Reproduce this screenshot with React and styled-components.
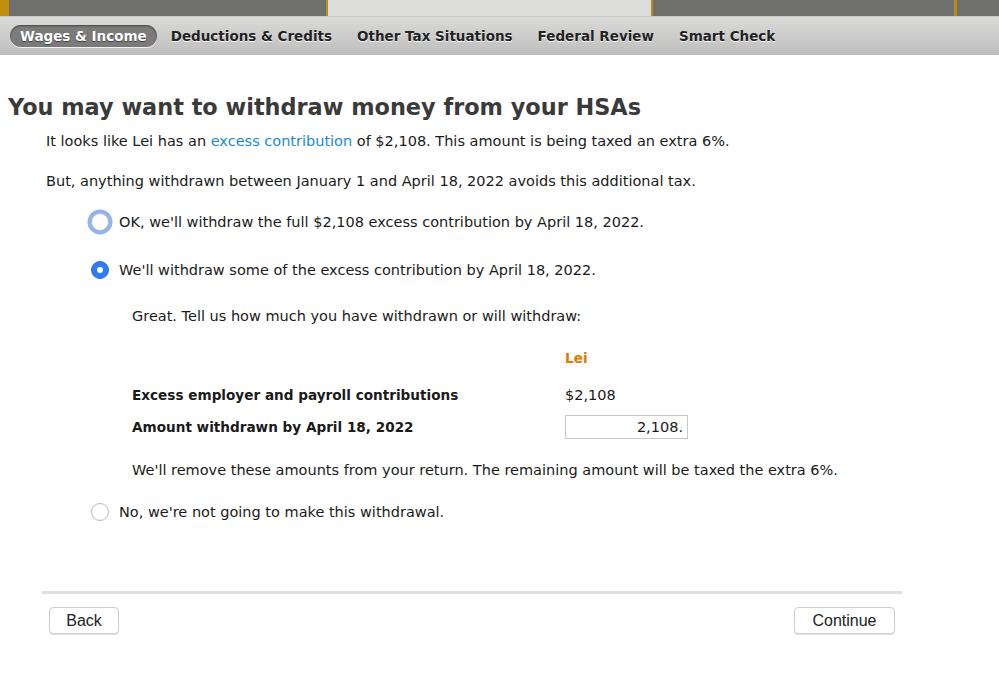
import React from "react";
import styled, { createGlobalStyle } from "styled-components";

const Global = createGlobalStyle`
  html, body { margin: 0; padding: 0; background: #fff; }
  body { font-family: "DejaVu Sans", "Noto Sans", sans-serif; color: #1a1a1a; }
`;

const Page = styled.div`
  width: 999px;
  height: 690px;
  overflow: hidden;
  display: flex;
  flex-direction: column;
`;

const TopTabs = styled.div`
  height: 16px;
  display: flex;
  background: #6f706e;
  border-left: 9px solid #c18f0f;
`;

const TopTab = styled.div`
  width: ${(p) => p.$w}px;
  flex: none;
  background: ${(p) => p.$bg || "#6f706e"};
  border-right: ${(p) => p.$edge || 0}px solid #b98c1a;
`;

const NavBar = styled.div`
  height: 38px;
  display: flex;
  align-items: center;
  padding-left: 10px;
  background: linear-gradient(#dadad9, #bebebe);
  border-top: 1px solid #c9c9c9;
`;

const NavItem = styled.div`
  font-size: 13.5px;
  font-weight: bold;
  padding: 0 ${(p) => (p.$active ? "10px" : "12.5px")};
  height: 22px;
  line-height: 22px;
  border-radius: 11px;
  margin-right: ${(p) => (p.$active ? "1.5px" : "0")};
  color: ${(p) => (p.$active ? "#fff" : "#222")};
  background: ${(p) => (p.$active ? "#7b7b7b" : "transparent")};
  box-shadow: ${(p) => (p.$active ? "inset 0 1px 2px rgba(0,0,0,.45), 0 1px 0 #f2f2f2" : "none")};
  text-shadow: ${(p) => (p.$active ? "0 1px 1px rgba(0,0,0,.5)" : "0 1px 0 #fff")};
  white-space: nowrap;
`;

const Content = styled.div`
  flex: 1;
  padding: 38px 0 0 8px;
  display: flex;
  flex-direction: column;
`;

const Title = styled.h1`
  margin: 0;
  font-size: 22.4px;
  font-weight: bold;
  color: #3a3a3a;
  line-height: 28px;
`;

const Para = styled.p`
  margin: ${(p) => p.$mt ?? 0}px 0 0 ${(p) => p.$ml ?? 38}px;
  font-size: 14.5px;
  line-height: 18px;
  color: #1a1a1a;
`;

const Link = styled.span`
  color: #1b8ad3;
`;

const Option = styled.div`
  margin: ${(p) => p.$mt}px 0 0 83px;
  display: flex;
  align-items: center;
  gap: 10px;
  font-size: 14.5px;
  line-height: 18px;
`;

const Radio = styled.span`
  width: 18px;
  height: 18px;
  box-sizing: border-box;
  border-radius: 50%;
  flex: none;
  position: relative;
  background: ${(p) => (p.$checked ? "#2f7cf6" : "#fff")};
  border: 1px solid ${(p) => (p.$checked ? "#2a6fe0" : "#b9b9b9")};
  box-shadow: ${(p) => (p.$focus ? "0 0 0 3.5px #8fb4ef" : "none")};
  &::after {
    content: "";
    display: ${(p) => (p.$checked ? "block" : "none")};
    position: absolute;
    left: 50%;
    top: 50%;
    width: 6px;
    height: 6px;
    margin: -3px 0 0 -3px;
    border-radius: 50%;
    background: #fff;
  }
`;

const Sub = styled.div`
  margin-left: 124px;
  display: flex;
  flex-direction: column;
`;

const Grid = styled.div`
  margin-top: 11px;
  display: grid;
  grid-template-columns: 433px 124px;
  font-size: 14.5px;
`;

const Cell = styled.div`
  height: ${(p) => p.$h}px;
  display: flex;
  align-items: center;
  font-weight: ${(p) => (p.$bold ? "bold" : "normal")};
  font-size: ${(p) => (p.$bold ? "13.6px" : "14.5px")};
  color: ${(p) => p.$color || "#1a1a1a"};
`;

const Input = styled.div`
  width: 123px;
  height: 24px;
  box-sizing: border-box;
  border: 1px solid #c8c8c8;
  text-align: right;
  padding-right: 4px;
  line-height: 22px;
  font-size: 14.5px;
`;

const Footer = styled.div`
  margin: 70px 0 0 34px;
  width: 860px;
  display: flex;
  flex-direction: column;
`;

const Divider = styled.div`
  height: 3px;
  background: #e0e0e0;
`;

const Buttons = styled.div`
  display: flex;
  justify-content: space-between;
  padding: 13px 7px 0 7px;
`;

const Button = styled.button`
  font-family: "Liberation Sans", Arial, sans-serif;
  font-size: 16px;
  color: #222;
  height: 27px;
  width: ${(p) => p.$w}px;
  background: #fff;
  border: 1px solid #cfcfcf;
  border-radius: 4px;
  box-shadow: 0 1px 1px rgba(0,0,0,.12);
  padding: 0;
`;

export default function App() {
  return (
    <Page>
      <Global />
      <TopTabs>
        <TopTab $w={317} $edge={2} />
        <TopTab $w={323} $bg="#dcdddb" $edge={2} />
        <TopTab $w={301} $edge={3} />
      </TopTabs>
      <NavBar>
        <NavItem $active>Wages &amp; Income</NavItem>
        <NavItem>Deductions &amp; Credits</NavItem>
        <NavItem>Other Tax Situations</NavItem>
        <NavItem>Federal Review</NavItem>
        <NavItem>Smart Check</NavItem>
      </NavBar>
      <Content>
        <Title>You may want to withdraw money from your HSAs</Title>
        <Para $mt={11}>
          It looks like Lei has an <Link>excess contribution</Link> of $2,108. This amount is being taxed an extra 6%.
        </Para>
        <Para $mt={22}>But, anything withdrawn between January 1 and April 18, 2022 avoids this additional tax.</Para>
        <Option $mt={23}>
          <Radio $focus />
          <span>OK, we'll withdraw the full $2,108 excess contribution by April 18, 2022.</span>
        </Option>
        <Option $mt={30}>
          <Radio $checked />
          <span>We'll withdraw some of the excess contribution by April 18, 2022.</span>
        </Option>
        <Sub>
          <Para $mt={28} $ml={0}>Great. Tell us how much you have withdrawn or will withdraw:</Para>
          <Grid>
            <Cell $h={43} />
            <Cell $h={43} $bold $color="#e07b00">Lei</Cell>
            <Cell $h={32} $bold>Excess employer and payroll contributions</Cell>
            <Cell $h={32}>$2,108</Cell>
            <Cell $h={32} $bold>Amount withdrawn by April 18, 2022</Cell>
            <Cell $h={32}><Input>2,108.</Input></Cell>
          </Grid>
          <Para $mt={18} $ml={0}>We'll remove these amounts from your return. The remaining amount will be taxed the extra 6%.</Para>
        </Sub>
        <Option $mt={24}>
          <Radio />
          <span>No, we're not going to make this withdrawal.</span>
        </Option>
        <Footer>
          <Divider />
          <Buttons>
            <Button $w={70}>Back</Button>
            <Button $w={101}>Continue</Button>
          </Buttons>
        </Footer>
      </Content>
    </Page>
  );
}
